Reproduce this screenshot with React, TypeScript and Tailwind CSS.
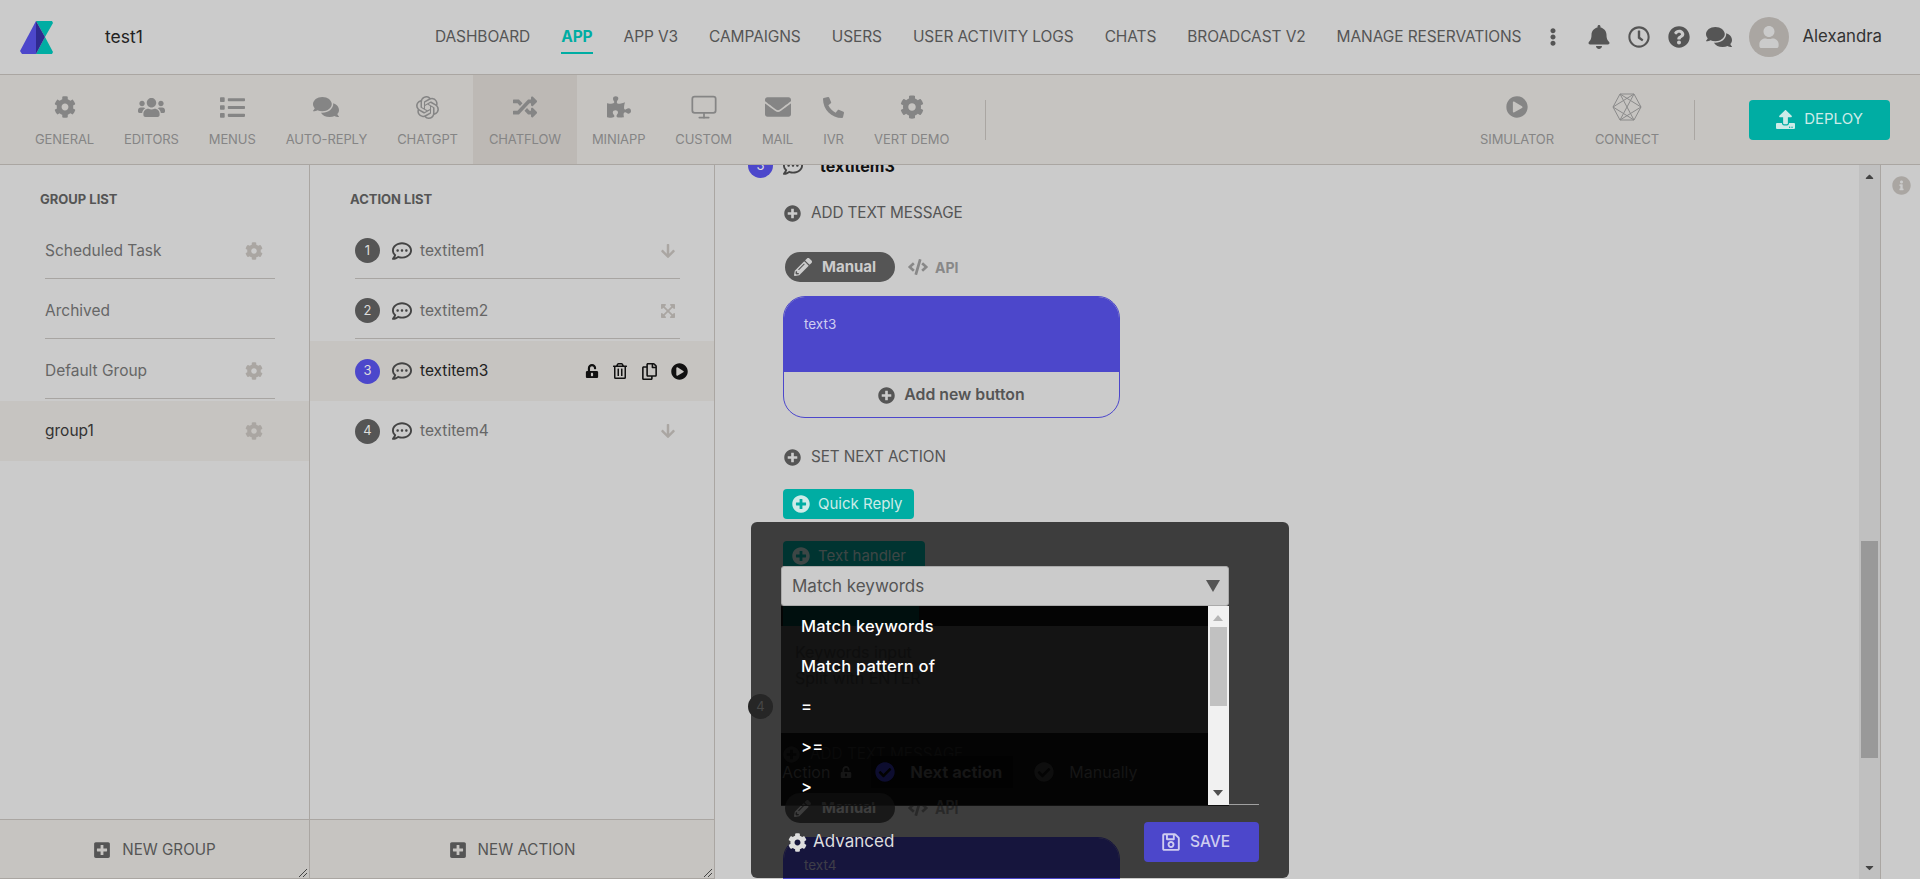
import { ReactNode } from "react";
import {
  FaCog, FaUsers, FaList, FaComments, FaRandom, FaPuzzlePiece, FaEnvelope, FaPhone, FaPlayCircle,
  FaUpload, FaBell, FaRegClock, FaQuestionCircle, FaEllipsisV, FaUser, FaRegCommentDots, FaArrowDown,
  FaExpandArrowsAlt, FaUnlockAlt, FaRegTrashAlt, FaRegCopy, FaPlusCircle, FaPlusSquare, FaPencilAlt,
  FaCode, FaRegSave, FaInfoCircle, FaCheckCircle, FaCaretUp, FaCaretDown,
} from "react-icons/fa";
import { SiOpenai } from "react-icons/si";
import { Monitor } from "lucide-react";

const NAV = ["DASHBOARD", "APP", "APP V3", "CAMPAIGNS", "USERS", "USER ACTIVITY LOGS", "CHATS", "BROADCAST V2", "MANAGE RESERVATIONS"];

function ConnectIcon() {
  return (
    <svg width="30" height="28" viewBox="0 0 30 28" fill="none" stroke="#8a8a8a" strokeWidth="1">
      <path d="M8 1h14l7 13-7 13H8L1 14z" />
      <path d="M8 1l14 26M22 1L8 27M1 14l21-13M29 14L8 27M1 14l21 13M29 14L8 1" />
    </svg>
  );
}

const TABS: { label: string; icon: ReactNode; active?: boolean }[] = [
  { label: "GENERAL", icon: <FaCog size={22} /> },
  { label: "EDITORS", icon: <FaUsers size={27} /> },
  { label: "MENUS", icon: <FaList size={25} /> },
  { label: "AUTO-REPLY", icon: <FaComments size={26} /> },
  { label: "CHATGPT", icon: <SiOpenai size={23} /> },
  { label: "CHATFLOW", icon: <FaRandom size={24} />, active: true },
  { label: "MINIAPP", icon: <FaPuzzlePiece size={24} /> },
  { label: "CUSTOM", icon: <Monitor size={28} strokeWidth={1.5} /> },
  { label: "MAIL", icon: <FaEnvelope size={26} /> },
  { label: "IVR", icon: <FaPhone size={21} className="-scale-x-100" /> },
  { label: "VERT DEMO", icon: <FaCog size={24} /> },
];

function Tab({ label, icon, active }: { label: string; icon: ReactNode; active?: boolean }) {
  return (
    <div className={`flex flex-col items-center h-full ${active ? "px-[16px] bg-[#bdb9b5]" : "px-[15px]"}`}>
      <div className="h-[30px] mt-[17px] flex items-center justify-center text-[#858585]">{icon}</div>
      <div className="mt-[7px] text-[13px] leading-[20px] text-[#858585] whitespace-nowrap tracking-[-0.1px]">{label}</div>
    </div>
  );
}

function GroupRow({ name, gear, active, last }: { name: string; gear?: boolean; active?: boolean; last?: boolean }) {
  return (
    <div className={`h-[60px] pl-[45px] pr-[34px] ${active ? "bg-[#c6c4c1] text-[#333]" : "text-[#666]"}`}>
      <div className={`h-[58px] pt-[2px] flex items-center justify-between text-[15.5px] ${last ? "" : "border-b border-[#a8a5a2]"}`}>
        <span>{name}</span>
        {gear && <FaCog size={18} className="text-[#aaa6a2] mr-[12px]" />}
      </div>
    </div>
  );
}

function ActionRow({ n, name, active, right, last }: { n: number; name: string; active?: boolean; right?: ReactNode; last?: boolean }) {
  return (
    <div className={`h-[60px] pl-[45px] pr-[34px] ${active ? "bg-[#c6c4c1] text-[#222]" : "text-[#666]"}`}>
      <div className={`h-[58px] pt-[2px] flex items-center text-[15.5px] ${last || active ? "" : "border-b border-[#a8a5a2]"}`}>
        <span className={`w-[25px] h-[25px] rounded-full flex items-center justify-center text-[13px] text-[#ddd] ${active ? "bg-[#4c47cb]" : "bg-[#555]"}`}>{n}</span>
        <FaRegCommentDots size={20} className="ml-[12px] text-[#444]" />
        <span className="ml-[8px]">{name}</span>
        <div className="ml-auto flex items-center">{right}</div>
      </div>
    </div>
  );
}

function AddRow({ label, className }: { label: string; className: string }) {
  return (
    <div className={`flex items-center h-[24px] text-[#555] ${className}`}>
      <FaPlusCircle size={17} />
      <span className="ml-[10px] text-[15.3px] tracking-[-0.1px]">{label}</span>
    </div>
  );
}

function ManualPill({ className }: { className: string }) {
  return (
    <div className={`flex items-center ${className}`}>
      <div className="w-[110px] h-[30px] rounded-full bg-[#555] flex items-center pl-[9px] text-[#ccc]">
        <FaPencilAlt size={18} />
        <span className="ml-[10px] text-[15px] font-bold">Manual</span>
      </div>
      <FaCode size={20} className="ml-[13px] text-[#888]" />
      <span className="ml-[7px] text-[14px] font-bold text-[#888]">API</span>
    </div>
  );
}

function MessageCard({ text }: { text: string }) {
  return (
    <div className="mt-[14px] w-[337px] h-[122px] rounded-[22px] border border-[#4c47cb] overflow-hidden">
      <div className="h-[75px] bg-[#4c47cb] pl-[20px] pt-[17px] text-[13.5px] leading-[20px] text-[#cfcdf0]">{text}</div>
      <div className="h-[46px] flex items-center justify-center text-[#555]">
        <FaPlusCircle size={17} />
        <span className="ml-[9px] text-[15.8px] font-semibold">Add new button</span>
      </div>
    </div>
  );
}

function TealButton({ label, className }: { label: string; className: string }) {
  return (
    <div className={`h-[30px] rounded-[4px] bg-[#00ada3] flex items-center pl-[9px] text-[#cdebe8] ${className}`}>
      <FaPlusCircle size={18} />
      <span className="ml-[8px] text-[15px]">{label}</span>
    </div>
  );
}

// what shows faintly through the open select list
function MenuGhost() {
  return (
    <>
      <div className="absolute left-[2px] top-0 w-[136px] h-[20px] bg-[#000f0e]" />
      <div className="absolute left-0 top-[20px] w-full h-[107px] bg-[#141414] pl-[14px] pt-[13px] text-[16px] leading-[26px] text-[#0e0e0e]">
        <div>Keywords input</div>
        <div>Split with ENTER</div>
      </div>
      <div className="absolute left-[2px] top-[137px] flex items-center text-[#0a0a0a]">
        <FaPlusCircle size={17} />
        <span className="ml-[10px] text-[15.3px]">ADD TEXT MESSAGE</span>
      </div>
      <div className="absolute left-0 top-[150px] w-full h-[32px] flex items-center text-[16px] text-[#161616]">
        <span className="ml-[1px]">Action</span>
        <FaUnlockAlt size={12} className="ml-[10px]" />
        <div className="ml-[19px] w-[142px] h-[32px] bg-[#020202] flex items-center pl-[2px]">
          <FaCheckCircle size={20} className="ml-[2px] text-[#0d0d2f]" />
          <span className="ml-[15px] text-[16.5px] font-bold">Next action</span>
        </div>
        <FaCheckCircle size={20} className="ml-[21px] text-[#0e0e0e]" />
        <span className="ml-[15px]">Manually</span>
      </div>
      <div className="absolute left-[4px] top-[187px] w-[110px] h-[30px] rounded-full bg-[#0c0c0c] flex items-center pl-[9px] text-[#1c1c1c]">
        <FaPencilAlt size={17} />
        <span className="ml-[10px] text-[15px] font-bold">Manual</span>
      </div>
      <span className="absolute left-[154px] top-[189px] text-[14px] font-bold text-[#141414]">API</span>
    </>
  );
}

function Triangle({ up, className }: { up?: boolean; className: string }) {
  return (
    <svg width="10" height="6" viewBox="0 0 10 6" className={className}>
      <path d={up ? "M5 0l5 6H0z" : "M0 0h10L5 6z"} fill="currentColor" />
    </svg>
  );
}

function SelectList() {
  const options = ["Match keywords", "Match pattern of", "=", ">=", ">"];
  return (
    <div className="absolute -left-px top-[39px] w-[448px] h-[200px] flex border-b border-[#111]">
      <div className="relative flex-1 bg-[#040404] overflow-hidden">
        <MenuGhost />
        <div className="relative">
          {options.map(o => (
            <div key={o} className="h-[40px] flex items-center pl-[20px] text-[16.5px] tracking-[0.2px] font-medium text-white">{o}</div>
          ))}
        </div>
      </div>
      <div className="w-[21px] bg-[#f1f1f1] relative">
        <Triangle up className="absolute left-[5px] top-[9px] text-[#b5b5b5]" />
        <div className="absolute left-[2px] top-[21px] w-[17px] h-[79px] bg-[#c1c1c1]" />
        <Triangle className="absolute left-[5px] bottom-[9px] text-[#505050]" />
      </div>
    </div>
  );
}

function Modal() {
  return (
    <div className="absolute left-[751px] top-[522px] w-[538px] h-[356px] rounded-[6px] bg-black/70 flex flex-col text-[#ccc]">
      <span className="absolute -left-[3px] top-[172px] w-[25px] h-[25px] rounded-full bg-[#262626] flex items-center justify-center text-[13px] text-[#464646]">4</span>
      <div className="relative ml-[30px] mt-[44px] w-[448px] h-[40px] rounded-[3px] bg-[#cbcbcb] border border-[#aaa] flex items-center pl-[10px] pr-[8px] text-[#555]">
        <span className="text-[17px] pt-[1px]">Match keywords</span>
        <svg width="14" height="12" viewBox="0 0 14 12" className="ml-auto -mt-[1px]">
          <path d="M0 0h14L7 12z" fill="#555" />
        </svg>
        <SelectList />
      </div>
      <div className="mt-auto mx-[30px] border-t border-[#a0a0a0] flex items-center justify-between pt-[17px] pb-[16px]">
        <div className="flex items-center ml-[7px]">
          <FaCog size={19} className="text-[#ddd]" />
          <span className="ml-[6px] text-[17px] text-[#ddd]">Advanced</span>
        </div>
        <div className="w-[115px] h-[40px] rounded-[4px] bg-[#4c47cb] flex items-center pl-[17px] text-[#cfcdf0]">
          <FaRegSave size={20} />
          <span className="ml-[9px] text-[15.5px] font-medium">SAVE</span>
        </div>
      </div>
    </div>
  );
}

export default function App() {
  return (
    <div className="relative h-screen w-full overflow-hidden flex flex-col bg-[#cbcbcb] font-['Inter',sans-serif]">
      {/* Top bar */}
      <header className="h-[75px] shrink-0 flex items-center border-b border-[#aaa6a2] pl-[20px] pr-[38px]">
        <svg width="33" height="33" viewBox="0 0 33 33" className="shrink-0">
          <path d="M0 30 16 0v33H2z" fill="#4c47cb" />
          <path d="M16 0h16l1 2-8 14 8 15-1 2H16l9-17z" fill="#00ada3" />
          <path d="M16 0l9 16-9 17z" fill="#2f2a8f" />
        </svg>
        <span className="ml-[52px] text-[17.5px] text-[#222]">test1</span>
        <nav className="ml-auto flex items-center gap-[31px] text-[15.5px] text-[#555] tracking-[-0.1px]">
          {NAV.map(n => (
            <span key={n} className={`whitespace-nowrap relative ${n === "APP" ? "font-bold text-[#00ada3]" : ""}`}>
              {n}
              {n === "APP" && <span className="absolute left-0 right-0 -bottom-[5px] h-[2px] bg-[#00ada3]" />}
            </span>
          ))}
        </nav>
        <FaEllipsisV size={18} className="ml-[23px] text-[#555]" />
        <FaBell size={24} className="ml-[25px] text-[#555]" />
        <FaRegClock size={22} className="ml-[17px] text-[#555]" />
        <FaQuestionCircle size={22} className="ml-[18px] text-[#555]" />
        <FaComments size={26} className="ml-[16px] text-[#555]" />
        <div className="ml-[17px] w-[40px] h-[40px] rounded-full bg-[#aaa6a2] flex items-center justify-center">
          <FaUser size={22} className="text-[#cbcbcb]" />
        </div>
        <span className="ml-[13px] text-[16.8px] text-[#333]">Alexandra</span>
      </header>

      {/* Sub nav */}
      <div className="h-[90px] shrink-0 flex bg-[#c6c4c1] border-b border-[#aaa6a2] pl-[20px] pr-[30px]">
        {TABS.map(t => <Tab key={t.label} {...t} />)}
        <div className="self-center ml-[21px] w-px h-[40px] bg-[#aaa6a2]" />
        <div className="ml-auto flex h-full">
          <div className="mr-[11px]">
            <Tab label="SIMULATOR" icon={<FaPlayCircle size={22} />} />
          </div>
          <Tab label="CONNECT" icon={<ConnectIcon />} />
        </div>
        <div className="self-center mr-[54px] ml-[20px] w-px h-[40px] bg-[#aaa6a2]" />
        <div className="self-center w-[141px] h-[40px] rounded-[4px] bg-[#00ada3] flex items-center justify-center text-[#cdebe8]">
          <FaUpload size={19} />
          <span className="ml-[9px] text-[15px]">DEPLOY</span>
        </div>
      </div>

      <div className="flex-1 min-h-0 flex">
        {/* Group list */}
        <aside className="relative w-[310px] shrink-0 border-r border-[#aaa6a2] flex flex-col">
          <div className="pl-[40px] pt-[24px] h-[56px] text-[13px] font-bold text-[#555] leading-[20px]">GROUP LIST</div>
          <GroupRow name="Scheduled Task" gear />
          <GroupRow name="Archived" />
          <GroupRow name="Default Group" gear />
          <GroupRow name="group1" gear active last />
          <div className="mt-auto h-[60px] pt-[2px] bg-[#c6c4c1] border-t border-b border-[#aaa6a2] flex items-center justify-center text-[#555]">
            <FaPlusSquare size={18} />
            <span className="ml-[11px] text-[15.2px]">NEW GROUP</span>
          </div>
          <span className="absolute right-[2px] bottom-[2px] w-[10px] h-[10px] bg-[repeating-linear-gradient(135deg,transparent_0,transparent_2px,#444_2px,#444_3px)] [clip-path:polygon(100%_0,100%_100%,0_100%)]" />
        </aside>

        {/* Action list */}
        <aside className="relative w-[405px] shrink-0 border-r border-[#aaa6a2] flex flex-col">
          <div className="pl-[40px] pt-[24px] h-[56px] text-[13px] font-bold text-[#555] leading-[20px]">ACTION LIST</div>
          <ActionRow n={1} name="textitem1" right={<FaArrowDown size={16} className="text-[#aaa6a2] mr-[4px]" />} />
          <ActionRow n={2} name="textitem2" right={<FaExpandArrowsAlt size={16} className="text-[#aaa6a2] mr-[4px]" />} />
          <ActionRow
            n={3}
            name="textitem3"
            active
            right={
              <div className="flex items-center text-[#111] -mr-[8px] gap-[13px]">
                <FaUnlockAlt size={14} />
                <FaRegTrashAlt size={16} />
                <FaRegCopy size={17} />
                <FaPlayCircle size={17} />
              </div>
            }
          />
          <ActionRow n={4} name="textitem4" last right={<FaArrowDown size={16} className="text-[#aaa6a2] mr-[4px]" />} />
          <div className="mt-auto h-[60px] pt-[2px] bg-[#c6c4c1] border-t border-b border-[#aaa6a2] flex items-center justify-center text-[#555]">
            <FaPlusSquare size={18} />
            <span className="ml-[11px] text-[15.2px]">NEW ACTION</span>
          </div>
          <span className="absolute right-[2px] bottom-[2px] w-[10px] h-[10px] bg-[repeating-linear-gradient(135deg,transparent_0,transparent_2px,#444_2px,#444_3px)] [clip-path:polygon(100%_0,100%_100%,0_100%)]" />
        </aside>

        {/* Main editor */}
        <main className="flex-1 min-w-0 overflow-hidden pl-[33px]">
          <div className="-mt-[12px] h-[25px] flex items-center">
            <span className="w-[25px] h-[25px] rounded-full bg-[#4c47cb] flex items-center justify-center text-[13px] text-[#ddd]">3</span>
            <FaRegCommentDots size={20} className="ml-[10px] text-[#444]" />
            <span className="ml-[17px] text-[16px] font-bold text-[#111]">textitem3</span>
          </div>
          <div className="pl-[35px]">
            <AddRow label="ADD TEXT MESSAGE" className="mt-[23px] ml-[1px]" />
            <ManualPill className="mt-[27px] ml-[2px]" />
            <MessageCard text="text3" />
            <AddRow label="SET NEXT ACTION" className="mt-[27px] ml-[1px]" />
            <TealButton label="Quick Reply" className="mt-[20px] w-[131px]" />
            <TealButton label="Text handler" className="mt-[22px] w-[142px]" />
            <ManualPill className="mt-[222px] ml-[2px]" />
            <MessageCard text="text4" />
          </div>
        </main>

        {/* Scroll bar */}
        <div className="w-[21px] shrink-0 bg-[#c0c0c0] relative">
          <FaCaretUp size={13} className="absolute left-[4px] top-[5px] text-[#444]" />
          <div className="absolute left-[2px] top-[376px] w-[17px] h-[217px] bg-[#999]" />
          <FaCaretDown size={13} className="absolute left-[4px] bottom-[5px] text-[#444]" />
        </div>

        {/* Info rail */}
        <div className="w-[40px] shrink-0 border-l border-[#aaa6a2] pt-[11px] pl-[11px]">
          <FaInfoCircle size={19} className="text-[#aaa6a2]" />
        </div>
      </div>

      <Modal />
    </div>
  );
}
